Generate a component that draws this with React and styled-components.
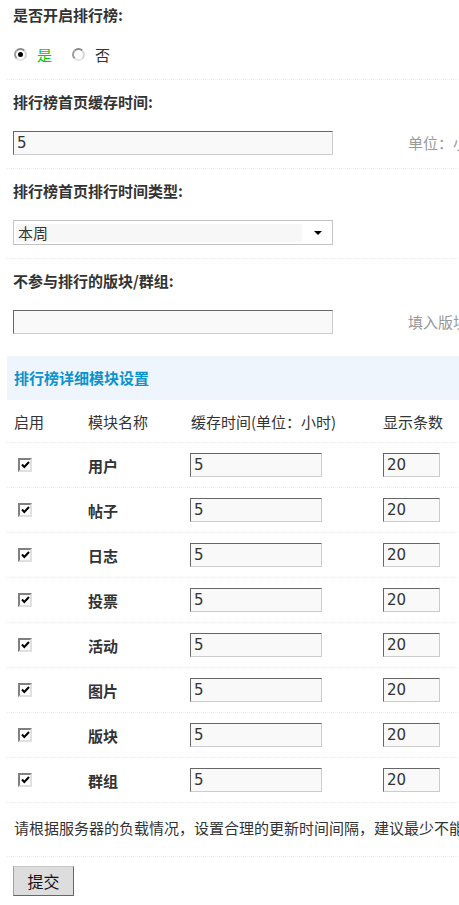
import React from 'react';
import styled, { createGlobalStyle } from 'styled-components';

const GlobalStyle = createGlobalStyle`
    html, body {
        margin: 0;
        padding: 0;
        background: #ffffff;
        overflow-x: hidden;
    }
    body {
        font-family: "Noto Sans CJK SC", "DejaVu Sans", sans-serif;
        font-size: 15px;
        color: #333;
    }
`;

const Page = styled.div`
    width: 900px;
    padding-left: 7px;
    box-sizing: border-box;
`;

const TitleRow = styled.div`
    padding: ${(p) => (p.$first ? '6px' : '13px')} 6px 0;
    line-height: 18px;
    font-weight: bold;
    color: #333;
`;

const ValueRow = styled.div`
    display: grid;
    grid-template-columns: 401px 1fr;
    align-items: center;
    padding: ${(p) => p.$top || '20px'} 0 ${(p) => p.$bottom || '13px'};
    border-bottom: ${(p) => (p.$noBorder ? 'none' : '1px dotted #deeffb')};
`;

const FieldCell = styled.div`
    padding-left: 6px;
    display: flex;
    align-items: center;
`;

const Tip = styled.div`
    color: #999;
    white-space: nowrap;
    line-height: 24px;
`;

const RadioGroup = styled.div`
    display: flex;
    align-items: center;
    height: 24px;
    padding-left: 7px;
`;

const RadioLabel = styled.label`
    display: flex;
    align-items: center;
    margin-right: 20px;
    color: ${(p) => (p.$checked ? '#00cc00' : '#333')};
`;

const RadioDot = styled.span`
    width: 13px;
    height: 13px;
    box-sizing: border-box;
    border-radius: 50%;
    border: 2px solid;
    border-color: #8a8a8a #d6d6d6 #e4e4e4 #9a9a9a;
    background: #fff;
    margin-right: 10px;
    display: flex;
    align-items: center;
    justify-content: center;

    &::after {
        content: '';
        width: 5px;
        height: 5px;
        border-radius: 50%;
        background: ${(p) => (p.$checked ? '#000' : 'transparent')};
    }
`;

const TextInput = styled.input`
    width: ${(p) => p.$w || '320px'};
    height: 24px;
    box-sizing: border-box;
    margin: 0;
    padding: 0 3px;
    background: #f9f9f9;
    border: 1px solid;
    border-color: #666 #ccc #ccc #666;
    font-family: "DejaVu Sans", sans-serif;
    font-size: 15px;
    color: #333;
    outline: none;
`;

const SelectBox = styled.div`
    width: 320px;
    height: 25px;
    box-sizing: border-box;
    border: 1px solid #c4c4c4;
    background: #fff;
    display: flex;
    align-items: center;
    padding: 3px 10px 3px 2px;
`;

const SelectValue = styled.span`
    flex: 1;
    height: 18px;
    line-height: 18px;
    background: #f7f7f7;
    padding-left: 2px;
    margin-right: 12px;
    color: #333;
`;

const Arrow = styled.span`
    width: 0;
    height: 0;
    border-left: 4px solid transparent;
    border-right: 4px solid transparent;
    border-top: 4px solid #000;
`;

const Partition = styled.div`
    background: #eef5fc;
    height: 44px;
    line-height: 44px;
    padding-left: 7px;
    font-weight: bold;
    color: #0a93cc;
`;

const GridRow = styled.div`
    display: grid;
    grid-template-columns: 74px 102px 193px 1fr;
    align-items: center;
    padding-left: 7px;
    height: ${(p) => p.$h || '44px'};
    border-bottom: 1px dotted #deeffb;
`;

const HeadCell = styled.div`
    padding-left: ${(p) => p.$pad || '0'};
    color: #333;
    white-space: nowrap;
`;

const ModuleName = styled.div`
    font-weight: bold;
    color: #333;
`;

const CheckBox = styled.span`
    width: 14px;
    height: 14px;
    box-sizing: border-box;
    margin-left: 4px;
    border: 2px solid;
    border-color: #808080 #e0e0e0 #e0e0e0 #808080;
    background: #fff;
    display: flex;
    align-items: center;
    justify-content: center;
`;

const Note = styled.div`
    padding-left: 7px;
    height: 53px;
    line-height: 50px;
    white-space: nowrap;
    border-bottom: 1px dotted #deeffb;
    color: #333;
`;

const Footer = styled.div`
    padding: 9px 6px 20px;
`;

const SubmitButton = styled.button`
    width: 61px;
    height: 30px;
    margin: 0;
    padding: 0;
    background: #dddddd;
    border: 1px solid;
    border-color: #c8c8c8 #666 #666 #a0a0a0;
    font-family: "Noto Sans CJK SC", sans-serif;
    font-size: 16px;
    color: #111;
    cursor: pointer;
`;

function Check() {
    return (
        <CheckBox>
            <svg width="9" height="8" viewBox="0 0 9 8">
                <path d="M1 3.5 L3.3 6 L8 1" fill="none" stroke="#000" strokeWidth="2" />
            </svg>
        </CheckBox>
    );
}

const modules = ['用户', '帖子', '日志', '投票', '活动', '图片', '版块', '群组'];

export default function App() {
    return (
        <Page>
            <GlobalStyle />

            <TitleRow $first>是否开启排行榜:</TitleRow>
            <ValueRow $top="18px" $bottom="13px">
                <RadioGroup>
                    <RadioLabel $checked>
                        <RadioDot $checked />是
                    </RadioLabel>
                    <RadioLabel>
                        <RadioDot />否
                    </RadioLabel>
                </RadioGroup>
                <Tip />
            </ValueRow>

            <TitleRow>排行榜首页缓存时间:</TitleRow>
            <ValueRow>
                <FieldCell>
                    <TextInput defaultValue="5" />
                </FieldCell>
                <Tip>单位：小时</Tip>
            </ValueRow>

            <TitleRow>排行榜首页排行时间类型:</TitleRow>
            <ValueRow>
                <FieldCell>
                    <SelectBox>
                        <SelectValue>本周</SelectValue>
                        <Arrow />
                    </SelectBox>
                </FieldCell>
                <Tip />
            </ValueRow>

            <TitleRow>不参与排行的版块/群组:</TitleRow>
            <ValueRow $noBorder $bottom="22px">
                <FieldCell>
                    <TextInput defaultValue="" />
                </FieldCell>
                <Tip>填入版块或群组的 ID，多个 ID 之间用半角逗号 "," 隔开</Tip>
            </ValueRow>

            <Partition>排行榜详细模块设置</Partition>

            <GridRow $h="42px">
                <HeadCell>启用</HeadCell>
                <HeadCell>模块名称</HeadCell>
                <HeadCell $pad="1px">缓存时间(单位：小时)</HeadCell>
                <HeadCell>显示条数</HeadCell>
            </GridRow>

            {modules.map((name) => (
                <GridRow key={name}>
                    <Check />
                    <ModuleName>{name}</ModuleName>
                    <TextInput $w="132px" defaultValue="5" />
                    <TextInput $w="57px" defaultValue="20" />
                </GridRow>
            ))}

            <Note>请根据服务器的负载情况，设置合理的更新时间间隔，建议最少不能低于 1 小时</Note>

            <Footer>
                <SubmitButton>提交</SubmitButton>
            </Footer>
        </Page>
    );
}
